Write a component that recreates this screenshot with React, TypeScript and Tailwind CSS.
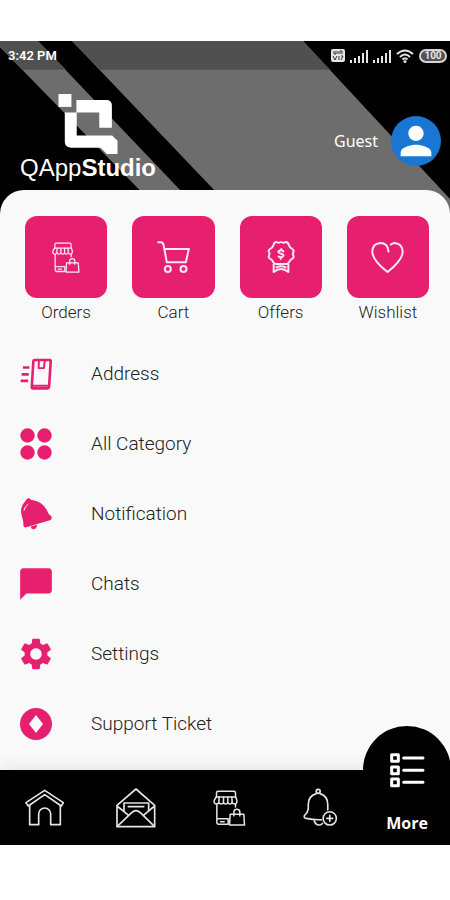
import type { ReactNode } from "react";
import { MdChatBubble, MdPerson, MdSettings } from "react-icons/md";

function StoreIcon({ className }: { className: string }) {
  return (
    <svg viewBox="28 31 98 108" className={className} fill="none" stroke="currentColor" strokeWidth="4.500" strokeLinejoin="round" strokeLinecap="round">
      <path d="M38 52V40Q38 35 43 35H90Q95 35 95 40V52" />
      <path d="M37 52H96L99 62V68Q98 73 92 73Q87 73 85 69Q83 73 78 73T72 69Q70 73 65 73T59 69Q57 73 52 73T45 69Q43 73 38 73Q32 73 31 68V62Z" />
      <path d="M46 52L45 69M59 52V69M72 52V69M84 52L85 69" />
      <path d="M39 74V128Q39 134 45 134H73M95 74V82M39 117H73M50 126H61M73 117V134" />
      <path d="M79 104H120L122 136H77Z" />
      <path d="M90 109V97Q91 89 99 89T108 97V109" />
    </svg>
  );
}

function CartIcon() {
  return (
    <svg viewBox="470 120 104 102" className="h-[34px] w-[35px]" fill="none" stroke="currentColor" strokeWidth="6" strokeLinecap="round" strokeLinejoin="round">
      <path d="M476 127H484Q490 127 492 134L502 187H559L568 147H496" />
      <circle cx="505" cy="207" r="9" />
      <circle cx="552" cy="207" r="9" />
    </svg>
  );
}

function OffersIcon() {
  return (
    <svg viewBox="122 120 88 102" className="h-[34px] w-[30px]" fill="none" stroke="currentColor" strokeWidth="6" strokeLinecap="round" strokeLinejoin="round">
      <path d="M152 126Q159 130 166 126Q173 130 181 126Q187 126 190 136Q193 144 200 147Q206 151 203 157Q200 161 203 166Q206 172 200 176Q193 179 190 187Q187 192 182 192H151Q146 192 143 187Q140 179 133 176Q127 172 130 166Q133 161 130 157Q127 151 133 147Q140 144 143 136Q146 126 152 126Z" />
      <path d="M144 193V216Q155 207 166 207T188 216V193M152 202Q166 195 180 202" />
      <path d="M173 154Q165 148 160 153T166 161T172 169T159 170M167 147V150M165 173V177" />
    </svg>
  );
}

function HeartIcon() {
  return (
    <svg viewBox="438 122 100 98" className="h-[33px] w-[33px]" fill="none" stroke="currentColor" strokeWidth="6" strokeLinecap="round" strokeLinejoin="round">
      <path d="M491 153Q490 127 466 127Q442 129 442 154Q443 180 488 215Q533 180 534 154Q533 129 510 127Q503 127 498 132" />
    </svg>
  );
}

function AddressIcon() {
  return (
    <svg viewBox="60 48 98 98" className="size-8" fill="none" stroke="currentColor" strokeWidth="5" strokeLinejoin="round">
      <path d="M69 77H89M65 98H87M62 118H85" strokeWidth="8" />
      <path d="M105 54H151Q155 54 154 59L149 136Q148 141 143 141H100Q96 141 96 136L101 58Q101 54 105 54Z" strokeWidth="8" />
      <path d="M118 55L117 79H133L136 55M99 133H147" strokeWidth="6" />
    </svg>
  );
}

function CategoryIcon() {
  return (
    <svg viewBox="0 0 32 32" className="size-8" fill="currentColor">
      <circle cx="7.500" cy="7.500" r="7.200" />
      <circle cx="24.500" cy="7.500" r="7.200" />
      <circle cx="7.500" cy="24.500" r="7.200" />
      <circle cx="24.500" cy="24.500" r="7.200" />
    </svg>
  );
}

function BellIcon() {
  return (
    <svg viewBox="60 472 98 98" className="size-8" fill="currentColor">
      <path d="M77 481Q80 471 89 473L95 478Q130 482 143 511Q147 523 155 527Q160 533 154 539L77 562Q70 562 70 555Q72 547 67 533Q56 502 77 481Z" />
      <path d="M92 560L112 554Q112 565 102 568Q95 568 92 560Z" />
      <path d="M72 511Q74 498 85 491" fill="none" stroke="#f9f9f9" strokeWidth="3" />
    </svg>
  );
}

function TicketIcon() {
  return (
    <svg viewBox="0 0 32 32" className="size-8" fill="currentColor">
      <path fillRule="evenodd" d="M16 0A16 16 0 1 0 16 32A16 16 0 1 0 16 0ZM16 7L23 16L16 25L9 16Z" />
    </svg>
  );
}

function HomeIcon() {
  return (
    <svg viewBox="78 116 120 111" className="h-[37px] w-10" fill="none" stroke="currentColor" strokeWidth="5" strokeLinejoin="round">
      <path d="M137 120L193 157L187 167L137 133L88 167L81 157Z" />
      <path d="M92 165V223H119V191A18 18 0 0 1 155 191V223H184V165" />
    </svg>
  );
}

function MailIcon() {
  return (
    <svg viewBox="349 113 120 120" className="size-10" fill="none" stroke="currentColor" strokeWidth="5" strokeLinejoin="round">
      <path d="M352 165L409 116L465 165V229H352Z" />
      <path d="M373 182V158H447V182M384 169H434" />
      <path d="M352 229L396 187Q409 175 422 187L465 229M352 167L387 195M465 167L431 195" />
    </svg>
  );
}

function BellPlusIcon() {
  return (
    <svg viewBox="232 236 106 116" className="h-[39px] w-[35px]" fill="none" stroke="currentColor" strokeWidth="5" strokeLinecap="round" strokeLinejoin="round">
      <circle cx="278" cy="245" r="6" />
      <path d="M272 252Q248 259 248 285V298Q247 309 236 319Q234 325 242 327Q264 332 288 331M284 252Q307 259 307 285V301" />
      <path d="M266 334Q270 347 281 347Q288 347 291 342" />
      <circle cx="313" cy="327" r="20" />
      <path d="M313 318V336M304 327H322" />
    </svg>
  );
}

function MoreIcon() {
  return (
    <svg viewBox="496 126 108 108" className="size-9" fill="none" stroke="currentColor" strokeLinecap="round">
      <g strokeWidth="9" strokeLinejoin="round">
        <rect x="504" y="134" width="20" height="20" />
        <rect x="504" y="171" width="20" height="20" />
        <rect x="504" y="207" width="20" height="20" />
      </g>
      <path d="M540 144H598M540 181H598M540 217H598" strokeWidth="9" />
    </svg>
  );
}

function LogoMark() {
  return (
    <svg viewBox="175 171 180 181" className="size-[60px]" fill="currentColor">
      <path d="M176 171H215V210H176Z" />
      <path d="M230 189H323Q337 191 337 205V273H299V227H230Z" />
      <path d="M195 227H231V296H338L354 312V352H322L303 333H213Q195 331 195 315Z" />
    </svg>
  );
}

function SignalIcon() {
  return (
    <svg viewBox="0 0 18 14" className="h-3.5 w-[18px]" fill="currentColor">
      <path d="M0 11h2v3h-2zM4 9h2v5h-2zM8 7h2v7h-2zM12 4h2v10h-2zM16 1h2v13h-2z" />
    </svg>
  );
}

function StatusIcons() {
  return (
    <div className="flex items-center gap-[5px] text-neutral-200">
      <svg viewBox="0 0 14 13" className="h-[13px] w-3.5">
        <rect width="14" height="13" rx="2" fill="currentColor" />
        <path d="M3 2V5H5V2M7 2V5M9 5V2H11V5M2 7L4 11L6 7M8 11V7M10 7H12L10 11" fill="none" stroke="#333" />
      </svg>
      <SignalIcon />
      <SignalIcon />
      <svg viewBox="0 0 18 14" className="h-3.5 w-[18px]" fill="none" stroke="currentColor" strokeWidth="2">
        <path d="M1 5Q9 -2 17 5M4 8Q9 3 14 8M6.500 10.500Q9 8 11.500 10.500" />
        <circle cx="9" cy="12.500" r="1.500" fill="currentColor" stroke="none" />
      </svg>
      <span className="flex h-3.5 w-7 items-center justify-center rounded-full border-2 border-neutral-300 bg-neutral-600 text-[10px] leading-none font-bold">
        100
      </span>
    </div>
  );
}

const shortcuts: { label: string; icon: ReactNode }[] = [
  { label: "Orders", icon: <StoreIcon className="h-[31px] w-7" /> },
  { label: "Cart", icon: <CartIcon /> },
  { label: "Offers", icon: <OffersIcon /> },
  { label: "Wishlist", icon: <HeartIcon /> },
];

const menu: { label: string; icon: ReactNode }[] = [
  { label: "Address", icon: <AddressIcon /> },
  { label: "All Category", icon: <CategoryIcon /> },
  { label: "Notification", icon: <BellIcon /> },
  { label: "Chats", icon: <MdChatBubble className="size-[38px] shrink-0" /> },
  { label: "Settings", icon: <MdSettings className="size-[38px] shrink-0" /> },
  { label: "Support Ticket", icon: <TicketIcon /> },
];

const tabs: { label: string; icon: ReactNode }[] = [
  { label: "Home", icon: <HomeIcon /> },
  { label: "Messages", icon: <MailIcon /> },
  { label: "Orders", icon: <StoreIcon className="h-9 w-[33px]" /> },
  { label: "Alerts", icon: <BellPlusIcon /> },
];

export default function App() {
  return (
    <div className="min-h-screen bg-white pt-[41px] pb-[54px] font-['Roboto',sans-serif]">
      <div className="overflow-hidden">
        <header className="relative bg-black text-white">
          <svg viewBox="0 0 450 174" preserveAspectRatio="none" className="absolute inset-0 size-full" aria-hidden="true">
            <path d="M0 0H38L203 174H163L0 6Z" fill="#6d6d6d" />
            <path d="M72 0H303L464 174H237Z" fill="#6d6d6d" />
            <path d="M0 0H38L66 29H22L0 6Z" fill="#505050" />
            <path d="M72 0H303L330 29H100Z" fill="#505050" />
          </svg>
          <div className="relative flex h-[29px] items-center justify-between pr-[3px] pl-2">
            <span className="text-[13px] font-semibold">3:42 PM</span>
            <StatusIcons />
          </div>
          <div className="relative flex items-start justify-between pt-6 pr-[9px] pb-8 pl-5">
            <div className="flex flex-col items-center">
              <LogoMark />
              <p className="font-['Liberation_Sans',sans-serif] text-2xl leading-7">
                QApp<b>Studio</b>
              </p>
            </div>
            <button type="button" className="mt-[22px] flex items-center gap-[13px]">
              <span className="font-['Noto_Sans',sans-serif] text-base">Guest</span>
              <span className="flex size-[50px] items-center justify-center rounded-full bg-[#1976d2]">
                <MdPerson className="size-[46px]" />
              </span>
            </button>
          </div>
        </header>

        <main className="relative -mt-6 rounded-t-3xl bg-[#f9f9f9] pb-[11px] text-[#222]">
          <div className="grid grid-cols-4 gap-[25px] pt-[26px] pr-[21px] pl-[25px]">
            {shortcuts.map((s) => (
              <button key={s.label} type="button" className="flex flex-col items-center gap-0.5">
                <span className="flex aspect-square w-full items-center justify-center rounded-xl bg-[#e6206e] text-pink-100">
                  {s.icon}
                </span>
                <span className="text-[17px] leading-6 font-light">{s.label}</span>
              </button>
            ))}
          </div>
          <ul className="mt-[15px]">
            {menu.map((m) => (
              <li key={m.label}>
                <button type="button" className="flex h-[70px] w-full items-center gap-[39px] pl-5 text-left">
                  <span className="flex w-8 justify-center text-[#e6206e]">{m.icon}</span>
                  <span className="text-[19px] leading-7 font-light">{m.label}</span>
                </button>
              </li>
            ))}
          </ul>
        </main>

        <nav className="relative grid h-[75px] grid-cols-[90fr_92fr_94fr_88fr_86fr] bg-black text-neutral-200 shadow-[0_-4px_14px_rgba(0,0,0,0.08)]">
          {tabs.map((t) => (
            <button key={t.label} type="button" aria-label={t.label} className="flex items-center justify-center">
              {t.icon}
            </button>
          ))}
          <button type="button" className="relative flex flex-col items-center justify-end pb-2.5 text-white">
            <span className="absolute -top-11 flex size-[88px] items-center justify-center rounded-full bg-black">
              <MoreIcon />
            </span>
            <span className="relative font-['Open_Sans',sans-serif] text-base leading-6 font-bold">More</span>
          </button>
        </nav>
      </div>
    </div>
  );
}
